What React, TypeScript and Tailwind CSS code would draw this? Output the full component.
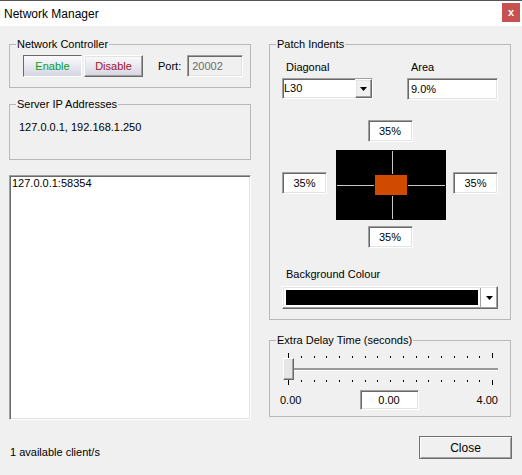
import React from "react";
import clsx from "clsx";

// classic 3D borders
const sunken =
  "border border-t-[#a0a0a0] border-l-[#a0a0a0] border-b-white border-r-white shadow-[inset_1px_1px_0_#696969,inset_-1px_-1px_0_#e3e3e3]";
const raised =
  "border border-t-white border-l-white border-b-[#696969] border-r-[#696969] shadow-[inset_-1px_-1px_0_#a0a0a0,inset_1px_1px_0_#e3e3e3]";

function Group({ title, className, children }: { title: string; className?: string; children: React.ReactNode }) {
  return (
    <div className={clsx("flex flex-col border border-[#b9b9b9]", className)}>
      <span className="-mt-[7px] ml-[6px] self-start bg-[#f0f0f0] px-[1px] text-[11px] leading-[13px] text-black">
        {title}
      </span>
      {children}
    </div>
  );
}

function Pct({ value }: { value: string }) {
  return (
    <div className={clsx(sunken, "flex h-[22px] w-[45px] items-center justify-center bg-white text-[11px] leading-[13px]")}>
      {value}
    </div>
  );
}

function DownArrow() {
  return (
    <svg width="7" height="4" viewBox="0 0 7 4">
      <path d="M0 0h7L3.5 4z" fill="#000" />
    </svg>
  );
}

function Ticks({ up }: { up: boolean }) {
  const n = 17;
  return (
    <div className={clsx("mx-[5px] flex h-[5px] justify-between", up ? "items-end" : "items-start")}>
      {Array.from({ length: n }).map((_, i) => (
        <div key={i} className={clsx("w-[1px] bg-black", i === 0 || i === n - 1 ? "h-[5px]" : "h-[2px]")} />
      ))}
    </div>
  );
}

export default function App() {
  return (
    <div className="h-[475px] w-[522px] overflow-hidden bg-[#f0f0f0] font-['Liberation_Sans',Arial,sans-serif] text-black">
      {/* title bar */}
      <div className="flex h-[26px] items-center justify-between border-t border-[#555555] bg-white pl-[4px] pr-[2px]">
        <span className="text-[12px] leading-[16px]">Network Manager</span>
        <div className="mb-[2px] flex h-[19px] w-[18px] items-center justify-center bg-[#c75050] text-[11px] font-bold leading-none text-white">
          x
        </div>
      </div>

      <div className="flex gap-[18px] px-[9px] pt-[18px]">
        {/* left column */}
        <div className="flex w-[242px] flex-col">
          <Group title="Network Controller" className="h-[44px]">
            <div className="mt-[4px] flex items-center pl-[13px]">
              <button className="flex h-[22px] w-[59px] items-center justify-center border border-t-[#696969] border-l-[#696969] border-b-white border-r-white bg-linear-to-b from-[#fbfbfb] to-[#d6d6e4] text-[11px] text-[#0a9b2a]">
                Enable
              </button>
              <button
                className={clsx(
                  raised,
                  "ml-[2px] flex h-[22px] w-[59px] items-center justify-center bg-linear-to-b from-[#fbfbfb] to-[#d6d6e4] text-[11px] text-[#a0142c]"
                )}
              >
                Disable
              </button>
              <span className="ml-[15px] text-[11px]">Port:</span>
              <div className={clsx(sunken, "ml-[6px] flex h-[22px] w-[56px] items-center bg-[#f0f0f0] pl-[4px] text-[11px] text-[#6d6d6d]")}>
                20002
              </div>
            </div>
          </Group>

          <Group title="Server IP Addresses" className="mt-[16px] h-[56px]">
            <span className="mt-[10px] pl-[9px] text-[11px] leading-[13px]">127.0.0.1, 192.168.1.250</span>
          </Group>

          <div className={clsx(sunken, "mt-[15px] h-[245px] bg-white pl-[2px] pt-[1px] text-[11px] leading-[13px]")}>
            127.0.0.1:58354
          </div>

          <span className="mt-[26px] pl-[1px] text-[11px] leading-[13px]">1 available client/s</span>
        </div>

        {/* right column */}
        <div className="flex w-[242px] flex-col">
          <Group title="Patch Indents" className="h-[276px]">
            <div className="mt-[10px] flex gap-[34px] pl-[12px]">
              <div className="flex w-[91px] flex-col">
                <span className="ml-[4px] text-[11px] leading-[13px]">Diagonal</span>
                <div className={clsx(sunken, "mt-[4px] flex h-[21px] items-center bg-white text-[11px]")}>
                  <span className="flex-1 pl-[1px]">L30</span>
                  <div className={clsx(raised, "flex h-full w-[17px] items-center justify-center bg-[#f0f0f0]")}>
                    <DownArrow />
                  </div>
                </div>
              </div>
              <div className="flex w-[91px] flex-col">
                <span className="ml-[4px] text-[11px] leading-[13px]">Area</span>
                <div className={clsx(sunken, "mt-[4px] flex h-[22px] items-center bg-white pl-[3px] text-[11px]")}>
                  9.0%
                </div>
              </div>
            </div>

            <div className="mt-[20px] flex justify-center">
              <Pct value="35%" />
            </div>

            <div className="mt-[8px] flex items-start pl-[12px]">
              <div className="mt-[22px]">
                <Pct value="35%" />
              </div>
              <svg width="110" height="70" viewBox="0 0 110 70" className="ml-[9px]">
                <rect width="110" height="70" fill="#000" />
                <line x1="56.5" y1="1" x2="56.5" y2="24" stroke="#c8c8c8" />
                <line x1="56.5" y1="46" x2="56.5" y2="69" stroke="#c8c8c8" />
                <line x1="1" y1="35.5" x2="38" y2="35.5" stroke="#c8c8c8" />
                <line x1="72" y1="35.5" x2="109" y2="35.5" stroke="#c8c8c8" />
                <rect x="39" y="25" width="32" height="20" fill="#d04a02" />
              </svg>
              <div className="ml-[7px] mt-[22px]">
                <Pct value="35%" />
              </div>
            </div>

            <div className="mt-[6px] flex justify-center">
              <Pct value="35%" />
            </div>

            <span className="ml-[16px] mt-[20px] text-[11px] leading-[13px]">Background Colour</span>
            <div className={clsx(raised, "ml-[12px] mt-[5px] flex h-[23px] w-[216px] items-center bg-white pl-[3px]")}>
              <div className="h-[15px] flex-1 bg-black" />
              <div className="ml-[2px] h-[19px] w-[1px] bg-[#a0a0a0]" />
              <div className="flex w-[16px] items-center justify-center">
                <DownArrow />
              </div>
            </div>
          </Group>

          <Group title="Extra Delay Time (seconds)" className="mt-[20px] h-[77px]">
            <div className="mt-[6px] flex flex-col pl-[13px] pr-[12px]">
              <Ticks up />
              <div className="flex h-[22px] items-center">
                <div className={clsx(raised, "h-[22px] w-[11px] bg-[#e6e6e6]")} />
                <div className="h-[3px] flex-1 border-t-2 border-b border-t-[#9a9a9a] border-b-white" />
              </div>
              <Ticks up={false} />
            </div>
            <div className="mt-[5px] flex items-center justify-between pl-[10px] pr-[12px] text-[11px]">
              <span>0.00</span>
              <div className={clsx(sunken, "flex h-[20px] w-[59px] items-center justify-center bg-white")}>0.00</div>
              <span>4.00</span>
            </div>
          </Group>

          <button
            className={clsx(
              "mt-[19px] -mr-[1px] flex h-[23px] w-[93px] items-center justify-center self-end border border-[#6e6e6e] bg-[#f0f0f0] text-[12px] shadow-[inset_1px_1px_0_#ffffff,inset_-1px_-1px_0_#a0a0a0]"
            )}
          >
            Close
          </button>
        </div>
      </div>
    </div>
  );
}
